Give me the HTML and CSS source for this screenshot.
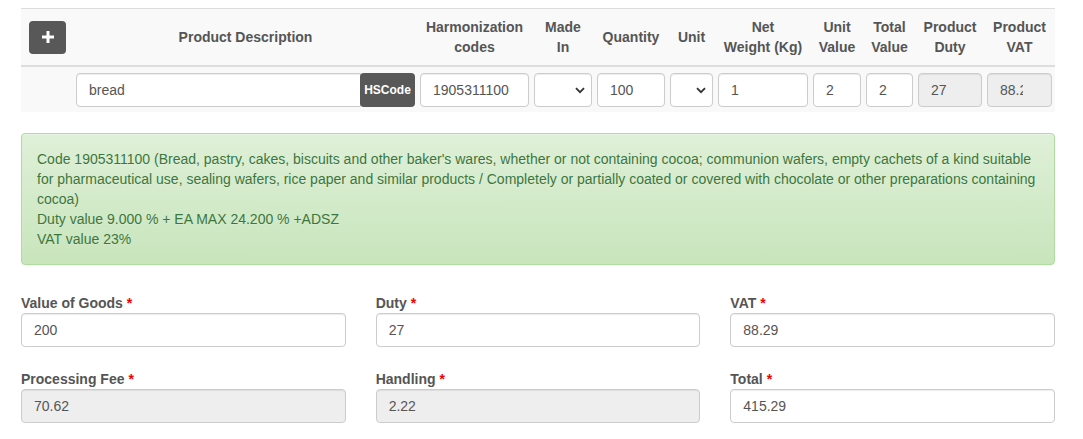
FILE: index.html
```html
<!DOCTYPE html>
<html lang="en">
<head>
<meta charset="utf-8">
<title>Products</title>
<link rel="stylesheet" href="styles.css">
</head>
<body>
<div class="page">
  <table class="items">
    <colgroup>
      <col class="c-add"><col class="c-desc"><col class="c-hs"><col class="c-made"><col class="c-qty"><col class="c-unit"><col class="c-net"><col class="c-uval"><col class="c-tval"><col class="c-duty"><col class="c-vat">
    </colgroup>
    <thead>
      <tr>
        <th>
          <button class="btn-add" type="button" aria-label="Add">
            <svg width="12" height="12" viewBox="0 0 12 12"><rect x="4.5" y="0" width="3" height="12" fill="#fff"/><rect x="0" y="4.5" width="12" height="3" fill="#fff"/></svg>
          </button>
        </th>
        <th>Product Description</th>
        <th>Harmonization codes</th>
        <th>Made<br>In</th>
        <th>Quantity</th>
        <th>Unit</th>
        <th>Net<br>Weight (Kg)</th>
        <th>Unit Value</th>
        <th>Total Value</th>
        <th>Product Duty</th>
        <th>Product VAT</th>
      </tr>
    </thead>
    <tbody>
      <tr>
        <td></td>
        <td>
          <div class="input-group">
            <input class="ctl grow" type="text" value="bread">
            <button class="btn-hs" type="button">HSCode</button>
          </div>
        </td>
        <td><input class="ctl" type="text" value="1905311100"></td>
        <td><div class="ctl select"><svg width="10" height="7" viewBox="0 0 10 7"><path d="M1 1.2 L5 5.2 L9 1.2" fill="none" stroke="#333" stroke-width="1.8"/></svg></div></td>
        <td><input class="ctl" type="text" value="100"></td>
        <td><div class="ctl select"><svg width="10" height="7" viewBox="0 0 10 7"><path d="M1 1.2 L5 5.2 L9 1.2" fill="none" stroke="#333" stroke-width="1.8"/></svg></div></td>
        <td><input class="ctl" type="text" value="1"></td>
        <td><input class="ctl" type="text" value="2"></td>
        <td><input class="ctl" type="text" value="2"></td>
        <td><input class="ctl ro" type="text" value="27" readonly></td>
        <td><input class="ctl ro clip" type="text" value="88.29" readonly></td>
      </tr>
    </tbody>
  </table>

  <div class="alert">
    Code 1905311100 (Bread, pastry, cakes, biscuits and other baker's wares, whether or not containing cocoa; communion wafers, empty cachets of a kind suitable for pharmaceutical use, sealing wafers, rice paper and similar products / Completely or partially coated or covered with chocolate or other preparations containing cocoa)<br>
    Duty value 9.000 % + EA MAX 24.200 % +ADSZ<br>
    VAT value 23%
  </div>

  <div class="totals">
    <div class="field">
      <label>Value of Goods <span class="req">*</span></label>
      <input class="ctl" type="text" value="200">
    </div>
    <div class="field">
      <label>Duty <span class="req">*</span></label>
      <input class="ctl" type="text" value="27">
    </div>
    <div class="field">
      <label>VAT <span class="req">*</span></label>
      <input class="ctl" type="text" value="88.29">
    </div>
    <div class="field">
      <label>Processing Fee <span class="req">*</span></label>
      <input class="ctl ro" type="text" value="70.62" readonly>
    </div>
    <div class="field">
      <label>Handling <span class="req">*</span></label>
      <input class="ctl ro" type="text" value="2.22" readonly>
    </div>
    <div class="field">
      <label>Total <span class="req">*</span></label>
      <input class="ctl" type="text" value="415.29">
    </div>
  </div>
</div>
</body>
</html>
```

FILE: styles.css
```css
* { box-sizing: border-box; }

html, body {
  margin: 0;
  padding: 0;
  background: #fff;
}

body {
  font-family: "Liberation Sans", Arial, Helvetica, sans-serif;
  font-size: 14px;
  line-height: 20px;
  color: #333;
}

.page {
  width: 1034px;
  margin-left: 21px;
  padding-top: 8px;
}

.items {
  width: 1034px;
  table-layout: fixed;
  border-collapse: collapse;
  border-spacing: 0;
  background: #f9f9f9;
  border-top: 1px solid #ddd;
}

.c-add { width: 50px; }
.c-desc { width: 344px; }
.c-hs { width: 114px; }
.c-made { width: 63px; }
.c-qty { width: 73px; }
.c-unit { width: 48px; }
.c-net { width: 95px; }
.c-uval { width: 53px; }
.c-tval { width: 52px; }
.c-duty { width: 69px; }
.c-vat { width: 73px; }

.items th {
  padding: 8px 0 8px 5px;
  font-weight: bold;
  color: #555;
  text-align: center;
  vertical-align: middle;
  border-bottom: 2px solid #ddd;
  line-height: 20px;
}

.items th:first-child {
  padding-left: 8px;
}

.items th:last-child,
.items td:last-child {
  padding-right: 3px;
}

.items td {
  padding: 6px 0 5px 5px;
  vertical-align: top;
}

.btn-add {
  display: flex;
  align-items: center;
  justify-content: center;
  width: 37px;
  height: 33px;
  padding: 0;
  border: 0;
  border-radius: 4px;
  background: #585858;
  cursor: pointer;
}

.ctl {
  display: block;
  width: 100%;
  height: 34px;
  padding: 6px 12px;
  font-family: inherit;
  font-size: 14px;
  line-height: 20px;
  color: #555;
  background: #fff;
  border: 1px solid #ccc;
  border-radius: 4px;
  box-shadow: inset 0 1px 1px rgba(0, 0, 0, .075);
  outline: none;
}

.ctl.ro {
  background: #eee;
}

.ctl.clip {
  padding-right: 28px;
}

.select {
  display: flex;
  align-items: center;
  justify-content: flex-end;
  padding-right: 6px;
}

.input-group {
  display: flex;
}

.ctl.grow {
  flex: 1;
  min-width: 0;
  border-top-right-radius: 0;
  border-bottom-right-radius: 0;
}

.btn-hs {
  flex: none;
  width: 55px;
  height: 34px;
  padding: 0;
  margin-left: -1px;
  border: 0;
  border-radius: 4px;
  background: #585858;
  color: #fff;
  font-family: inherit;
  font-size: 12px;
  font-weight: bold;
  cursor: pointer;
}

.alert {
  margin-top: 21px;
  padding: 15px;
  border: 1px solid #b2dba1;
  border-radius: 4px;
  background: linear-gradient(to bottom, #dff0d8 0%, #c8e5bc 100%);
  color: #3c763d;
  box-shadow: inset 0 1px 0 rgba(255, 255, 255, .25), 0 1px 2px rgba(0, 0, 0, .05);
  text-shadow: 0 1px 0 rgba(255, 255, 255, .2);
}

.totals {
  display: grid;
  grid-template-columns: repeat(3, 1fr);
  column-gap: 30px;
  row-gap: 22px;
  margin-top: 28px;
}

.field label {
  display: block;
  font-weight: bold;
  color: #555;
  line-height: 20px;
}

.req {
  color: #e00;
}
```
